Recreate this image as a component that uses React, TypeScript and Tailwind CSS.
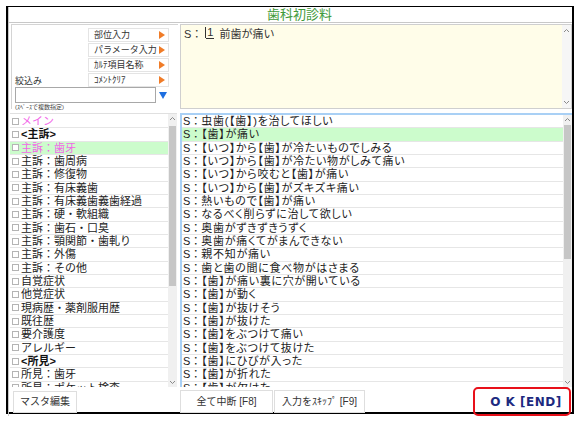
const LEFT_ITEMS: { label: string; tone?: "pink" | "bold"; selected?: boolean }[] = [
  { label: "メイン", tone: "pink" },
  { label: "<主訴>", tone: "bold" },
  { label: "主訴：歯牙", tone: "pink", selected: true },
  { label: "主訴：歯周病" },
  { label: "主訴：修復物" },
  { label: "主訴：有床義歯" },
  { label: "主訴：有床義歯義歯経過" },
  { label: "主訴：硬・軟組織" },
  { label: "主訴：歯石・口臭" },
  { label: "主訴：顎関節・歯軋り" },
  { label: "主訴：外傷" },
  { label: "主訴：その他" },
  { label: "自覚症状" },
  { label: "他覚症状" },
  { label: "現病歴・薬剤服用歴" },
  { label: "既往歴" },
  { label: "要介護度" },
  { label: "アレルギー" },
  { label: "<所見>", tone: "bold" },
  { label: "所見：歯牙" },
  { label: "所見：ポケット検査" },
];

const RIGHT_ITEMS = [
  "虫歯(【歯】)を治してほしい",
  "【歯】が痛い",
  "【いつ】から【歯】が冷たいものでしみる",
  "【いつ】から【歯】が冷たい物がしみて痛い",
  "【いつ】から咬むと【歯】が痛い",
  "【いつ】から【歯】がズキズキ痛い",
  "熱いもので【歯】が痛い",
  "なるべく削らずに治して欲しい",
  "奥歯がずきずきうずく",
  "奥歯が痛くてがまんできない",
  "親不知が痛い",
  "歯と歯の間に食べ物がはさまる",
  "【歯】が痛い裏に穴が開いている",
  "【歯】が動く",
  "【歯】が抜けそう",
  "【歯】が抜けた",
  "【歯】をぶつけて痛い",
  "【歯】をぶつけて抜けた",
  "【歯】にひびが入った",
  "【歯】が折れた",
  "【歯】が欠けた",
];

const TOOL_BUTTONS = ["部位入力", "パラメータ入力", "ｶﾙﾃ項目名称", "ｺﾒﾝﾄｸﾘｱ"];

const Arrow = ({ dir }: { dir: "up" | "down" }) => (
  <svg width="7" height="5" viewBox="0 0 7 5" className="text-[#8a8a8a]">
    <path
      d={dir === "up" ? "M1 4 L3.5 1.5 L6 4" : "M1 1 L3.5 3.5 L6 1"}
      fill="none"
      stroke="currentColor"
      strokeWidth="1"
    />
  </svg>
);

const ScrollBar = ({ thumbTop, thumbHeight }: { thumbTop: string; thumbHeight: string }) => (
  <div className="flex w-[9px] shrink-0 flex-col bg-[#f0f0f0]">
    <div className="flex h-[9px] items-center justify-center">
      <Arrow dir="up" />
    </div>
    <div className="flex flex-1 flex-col">
      <div className={thumbTop} />
      <div className={`mx-[1px] bg-[#c6c6c6] ${thumbHeight}`} />
    </div>
    <div className="flex h-[9px] items-center justify-center">
      <Arrow dir="down" />
    </div>
  </div>
);

const ToolButton = ({ label }: { label: string }) => (
  <div className="flex h-[14px] items-center justify-between border border-[#e4e4e4] bg-white pl-[5px] pr-[3px] text-[9px] leading-none text-[#333]">
    <span>{label}</span>
    <svg width="6" height="8" viewBox="0 0 6 8">
      <path d="M0 0 L6 4 L0 8 Z" fill="#f07c28" />
    </svg>
  </div>
);

const FooterButton = ({ label, className }: { label: string; className: string }) => (
  <div
    className={`flex items-center justify-center border border-[#dedede] bg-white text-[10px] leading-none text-[#333] ${className}`}
  >
    {label}
  </div>
);

export default function App() {
  return (
    <div className="h-[421px] w-[582px] bg-white pl-[6px] pt-[6px] font-['Liberation_Sans','Noto_Sans_CJK_JP',sans-serif]">
      <div className="flex h-[408px] w-[568px] flex-col border-b-2 border-l-2 border-r-2 border-t border-black bg-white">
        <div className="flex flex-1 flex-col border-l border-[#c8c8c8]">
          {/* title */}
          <div className="flex h-[16px] shrink-0 items-center justify-center border-b border-[#c8c8c8] pl-[18px] text-[13px] leading-none text-[#3f9a3a]">
            歯科初診料
          </div>

          {/* top section */}
          <div className="mt-[1px] flex h-[85px] shrink-0 gap-[2px]">
            <div className="ml-[2px] flex w-[167px] flex-col border-l border-t border-[#d4d4d4] pt-[3px]">
              <div className="flex">
                <div className="flex w-[76px] items-end pl-[3px] text-[9px] leading-[11px] text-[#333]">
                  絞込み
                </div>
                <div className="flex w-[81px] flex-col gap-[1px]">
                  {TOOL_BUTTONS.map((b) => (
                    <ToolButton key={b} label={b} />
                  ))}
                </div>
              </div>
              <div className="flex items-center pl-[3px]">
                <div className="h-[16px] w-[141px] border border-[#a8a8a8] bg-white" />
                <svg width="8" height="7" viewBox="0 0 8 7" className="ml-[3px]">
                  <path d="M0 0 L8 0 L4 7 Z" fill="#1e6fe0" />
                </svg>
              </div>
              <div className="pl-[3px] text-[6px] leading-[8px] text-[#444]">(ｽﾍﾟｰｽで複数指定)</div>
            </div>

            <div className="flex flex-1 border border-[#cfcfcf] bg-[#fffde9]">
              <div className="flex flex-1 items-start pl-[3px] pt-[2px] text-[11px] leading-[14px] text-[#333]">
                <span>S：</span>
                <span className="ml-[3px] inline-flex items-end">
                  <span className="mb-[1px] h-[11px] border-l border-[#333]" />
                  <span className="border-b border-[#333] px-[1px] leading-[11px]">1</span>
                </span>
                <span className="ml-[5px]">前歯が痛い</span>
              </div>
              <div className="flex w-[9px] flex-col items-center justify-between bg-[#f6f6f6] py-[3px]">
                <Arrow dir="up" />
                <Arrow dir="down" />
              </div>
            </div>
          </div>

          {/* lists */}
          <div className="mt-[4px] flex h-[274px] shrink-0 gap-[3px]">
            <div className="ml-[1px] flex w-[167px] border-t border-[#e0e0e0]">
              <div className="flex-1 overflow-hidden pt-[1px]">
                {LEFT_ITEMS.map((item) => (
                  <div
                    key={item.label}
                    className={`flex h-[13.33px] items-center border-b border-[#e6e6e6] pl-[2px] text-[11px] leading-[12px] whitespace-nowrap ${
                      item.selected ? "bg-[#ccfccc]" : "bg-white"
                    }`}
                  >
                    <span className="mr-[2px] h-[7px] w-[7px] shrink-0 border border-[#b4b4b4] bg-white" />
                    <span
                      className={
                        item.tone === "pink"
                          ? "text-[#f266e8]"
                          : item.tone === "bold"
                          ? "font-bold text-[#111]"
                          : "text-[#222]"
                      }
                    >
                      {item.label}
                    </span>
                  </div>
                ))}
              </div>
              <ScrollBar thumbTop="h-[3px]" thumbHeight="h-[160px]" />
            </div>

            <div className="flex flex-1 border-l-2 border-t-2 border-[#a9d0f5]">
              <div className="flex-1 overflow-hidden">
                {RIGHT_ITEMS.map((t, i) => (
                  <div
                    key={t}
                    className={`flex h-[13.33px] items-center border-b border-[#e6e6e6] pl-[1px] text-[11px] leading-[12px] whitespace-nowrap text-[#222] ${
                      i === 1 ? "bg-[#ccfccc]" : "bg-white"
                    }`}
                  >
                    <span>S：</span>
                    <span className="tracking-[0.7px] [font-feature-settings:'palt']">{t}</span>
                  </div>
                ))}
              </div>
              <ScrollBar thumbTop="h-[1px]" thumbHeight="h-[134px]" />
            </div>
          </div>

          {/* footer */}
          <div className="flex flex-1 items-center">
            <FooterButton label="マスタ編集" className="ml-[4px] h-[22px] w-[64px]" />
            <FooterButton label="全て中断 [F8]" className="ml-[103px] h-[23px] w-[93px]" />
            <FooterButton label="入力をｽｷｯﾌﾟ [F9]" className="ml-[1px] h-[23px] w-[91px]" />
            <div className="ml-auto mr-[1px] flex h-[29px] w-[98px] items-center justify-center rounded-[5px] border-2 border-[#e8101a] pl-[8px] font-['DejaVu_Sans',sans-serif] text-[12px] font-bold tracking-[0.5px] text-[#1d2a80]">
              O K [END]
            </div>
          </div>
        </div>
      </div>
    </div>
  );
}
